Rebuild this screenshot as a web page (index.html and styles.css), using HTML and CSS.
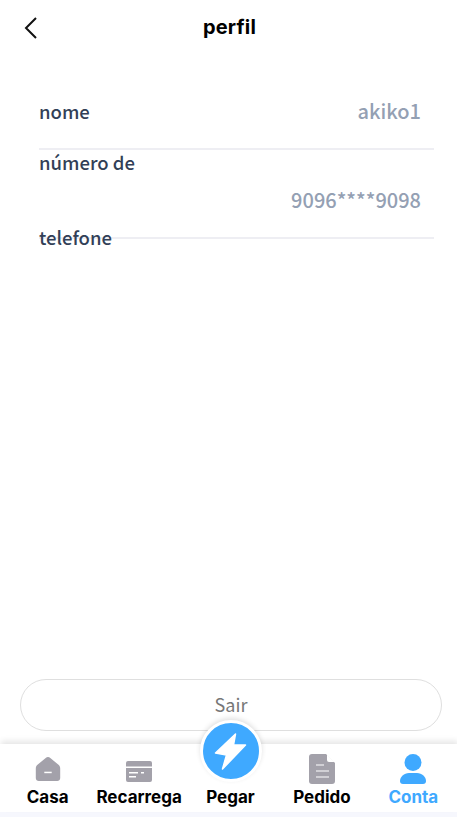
FILE: index.html
```html
<!DOCTYPE html>
<html lang="pt">
<head>
<meta charset="utf-8">
<title>perfil</title>
<link rel="stylesheet" href="styles.css">
</head>
<body>
<div class="page">
  <header class="topbar">
    <svg class="back" width="14" height="22" viewBox="0 0 14 22"><path d="M12 1 2 11l10 10" fill="none" stroke="#111" stroke-width="2"/></svg>
    <h1 class="title">perfil</h1>
  </header>
  <section class="info">
    <div class="row">
      <span class="label">nome</span>
      <span class="value">akiko1</span>
    </div>
    <div class="row row-phone">
      <span class="label label-wrap">número de telefone</span>
      <span class="value">9096****9098</span>
    </div>
  </section>
  <div class="spacer"></div>
  <div class="logout"><button class="logout-btn">Sair</button></div>
  <nav class="tabbar">
    <div class="tab">
      <svg width="26" height="30" viewBox="0 0 26 30"><path d="M13 3c.9 0 1.600.4 2.300 1l7.900 6.500c1.300 1.100 2 2.200 2 3.900v9.600c0 1.900-1.300 3-3 3H3.800c-1.700 0-3-1.100-3-3v-9.600c0-1.700.7-2.800 2-3.900L10.700 4c.7-.6 1.400-1 2.300-1z" fill="#a3a1aa"/><rect x="9.300" y="17.700" width="7.400" height="1.500" fill="#fff"/></svg>
      <span class="tab-label">Casa</span>
    </div>
    <div class="tab">
      <svg width="26" height="30" viewBox="0 0 26 30"><path d="M2 7h22a2 2 0 0 1 2 2v3.500H0V9a2 2 0 0 1 2-2zM0 14h26v12a2 2 0 0 1-2 2H2a2 2 0 0 1-2-2z" fill="#a3a1aa"/><path d="M3 18h9v1.500H3zM3 22h7v1.500H3zM15 18h3v1.500h-3z" fill="#fff"/></svg>
      <span class="tab-label">Recarrega</span>
    </div>
    <div class="tab tab-center">
      <div class="fab">
        <svg width="34" height="38" viewBox="0 0 34 38"><path d="M21.500 2 1.500 21l11 2-4 14 23-24h-12z" fill="#fff" stroke="#fff" stroke-width="1.500" stroke-linejoin="round"/></svg>
      </div>
      <span class="tab-label">Pegar</span>
    </div>
    <div class="tab">
      <svg width="26" height="30" viewBox="0 0 26 30"><path d="M3 0h14l9 9v18a3 3 0 0 1-3 3H3a3 3 0 0 1-3-3V3a3 3 0 0 1 3-3z" fill="#a3a1aa"/><path d="M18 .5 25.500 8H20a2 2 0 0 1-2-2z" fill="#fff"/><path d="M7 11h8M7 17h13M7 23h13" stroke="#fff" stroke-width="1.200"/></svg>
      <span class="tab-label">Pedido</span>
    </div>
    <div class="tab tab-active">
      <svg width="26" height="30" viewBox="0 0 26 30"><circle cx="13" cy="8.500" r="8.500" fill="#3fa9ff"/><path d="M9 19h8c5 0 9 4 9 8 0 2-1 3-3 3H3c-2 0-3-1-3-3 0-4 4-8 9-8z" fill="#3fa9ff"/></svg>
      <span class="tab-label">Conta</span>
    </div>
  </nav>
  <div class="bottom-strip"></div>
</div>
</body>
</html>
```
FILE: styles.css
```css
* { box-sizing: border-box; }
html, body { margin: 0; padding: 0; background: #fff; }
.page { width: 457px; height: 817px; display: flex; flex-direction: column; overflow: hidden; }
.topbar { height: 54px; flex: none; display: flex; align-items: center; justify-content: center; position: relative; }
.back { position: absolute; left: 24px; top: 17px; }
.title { margin: 0 0 0 2px; font: 700 20px/1 Inter, sans-serif; letter-spacing: .2px; color: #000; }
.info { flex: none; padding: 19px 23px 0 39px; }
.row { display: flex; justify-content: space-between; align-items: center; height: 77px; border-bottom: 2px solid #eeeef3; padding-right: 13px; }
.row-phone { margin-top: 12px; }
.label { font: 500 18.500px/75px "Noto Sans CJK SC", "Noto Sans", sans-serif; color: #323f57; padding-top: 1px; }
.label-wrap { width: 110px; flex: none; }
.value { font: 500 20px/30px "Noto Sans CJK SC", "Noto Sans", sans-serif; color: #94a0b3; }
.spacer { flex: 1; }
.logout { flex: none; padding: 0 15px 13px 20px; }
.logout-btn { display: block; width: 100%; height: 52px; border: 1px solid #dfdfdf; border-radius: 26px; background: #fff; color: #777; font: 400 18px "Noto Sans CJK SC", "Noto Sans", sans-serif; padding-bottom: 3px; }
.tabbar { flex: none; height: 68px; display: flex; background: #fff; box-shadow: 0 -4px 6px -1px rgba(0,0,0,.1); position: relative; padding-left: 2px; margin-right: -2px; }
.tab { flex: 1; display: flex; flex-direction: column; align-items: center; padding-top: 10px; gap: 2px; }
.tab-label { font: 700 17px/22px Inter, sans-serif; color: #000; white-space: nowrap; }
.tab-active .tab-label { color: #3fa9ff; }
.tab-center { position: relative; padding-top: 42px; }
.fab { position: absolute; top: -24px; left: 50%; margin-left: -31px; width: 62px; height: 62px; border-radius: 50%; background: #3fa9ff; border: 3px solid #fff; box-shadow: 0 -2px 5px rgba(0,0,0,.12); display: flex; align-items: center; justify-content: center; }
.bottom-strip { flex: none; height: 5px; background: #f6f7fd; }
```
